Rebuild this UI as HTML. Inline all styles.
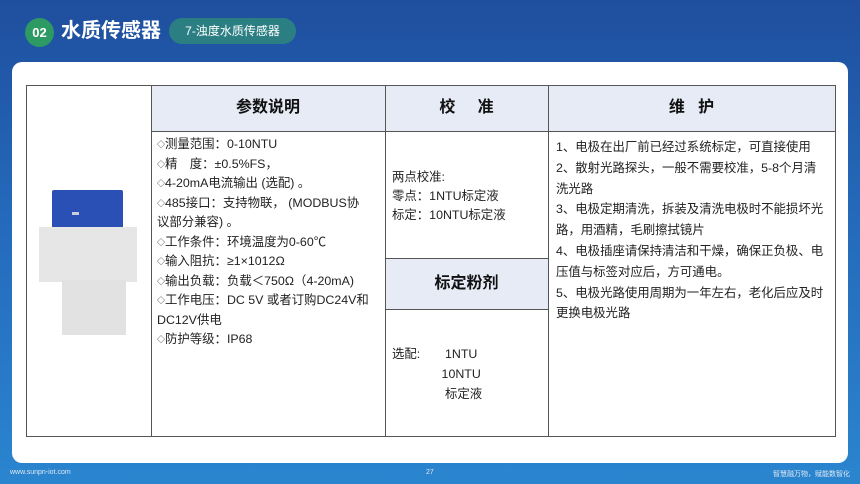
<!DOCTYPE html>
<html><head><meta charset="utf-8"><style>
*{margin:0;padding:0;box-sizing:border-box}
body{width:860px;height:484px;overflow:hidden;position:relative;font-family:"Liberation Sans","Noto Sans CJK SC",sans-serif;background:linear-gradient(180deg,#1f4e9e 0%,#2467b8 40%,#2a85cf 100%);color:#222}
.abs{position:absolute}
.num{left:25px;top:18px;width:29px;height:29px;border-radius:50%;background:#2e9a63;color:#fff;font-size:13px;font-weight:bold;text-align:center;line-height:29px}
.title{left:61px;top:16px;color:#fff;font-size:20px;font-weight:bold;line-height:30px}
.tag{left:169px;top:18px;width:127px;height:26px;border-radius:13px;background:#2b7f83;color:#fff;font-size:12px;line-height:26px;text-align:center}
.card{left:12px;top:62px;width:836px;height:401px;background:#fff;border-radius:10px}
.ln{position:absolute;background:#555}
.hd{position:absolute;background:#e6ebf6;font-size:16px;font-weight:bold;text-align:center;color:#111}
.t{position:absolute;font-size:12.4px;line-height:19.5px;white-space:nowrap}
.d{font-size:8px;vertical-align:1px}
.foot{top:469px;font-size:7px;color:#dfe9f5}
</style></head><body>
<div class="abs num">02</div>
<div class="abs title">水质传感器</div>
<div class="abs tag">7-浊度水质传感器</div>
<div class="abs card"></div>
<div class="hd" style="left:151px;top:85px;width:234px;height:46px;line-height:46px">参数说明</div>
<div class="hd" style="left:385px;top:85px;width:163px;height:46px;line-height:46px">校 &nbsp;&nbsp;&nbsp;&nbsp;准</div>
<div class="hd" style="left:548px;top:85px;width:287px;height:46px;line-height:46px">维 &nbsp;&nbsp;护</div>
<div class="hd" style="left:385px;top:258px;width:163px;height:51px;line-height:51px">标定粉剂</div>
<div class="ln" style="left:26px;top:85px;width:810px;height:1px"></div>
<div class="ln" style="left:26px;top:436px;width:810px;height:1px"></div>
<div class="ln" style="left:151px;top:131px;width:685px;height:1px"></div>
<div class="ln" style="left:385px;top:258px;width:163px;height:1px"></div>
<div class="ln" style="left:385px;top:309px;width:163px;height:1px"></div>
<div class="ln" style="left:26px;top:85px;width:1px;height:352px"></div>
<div class="ln" style="left:151px;top:85px;width:1px;height:352px"></div>
<div class="ln" style="left:385px;top:85px;width:1px;height:352px"></div>
<div class="ln" style="left:548px;top:85px;width:1px;height:352px"></div>
<div class="ln" style="left:835px;top:85px;width:1px;height:352px"></div>
<div class="abs" style="left:52px;top:190px;width:71px;height:44px;background:#2a4fb5;border-radius:2px"></div>
<div class="abs" style="left:72px;top:212px;width:7px;height:3px;background:#ccd"></div>
<div class="abs" style="left:39px;top:227px;width:98px;height:55px;background:#e6e6e6"></div>
<div class="abs" style="left:62px;top:280px;width:64px;height:55px;background:#e2e2e2"></div>
<div class="t" style="left:157px;top:135px"><span class="d">◇</span>测量范围：0-10NTU<br><span class="d">◇</span>精　度：±0.5%FS，<br><span class="d">◇</span>4-20mA电流输出 (选配) 。<br><span class="d">◇</span>485接口：支持物联， (MODBUS协<br>议部分兼容) 。<br><span class="d">◇</span>工作条件：环境温度为0-60℃<br><span class="d">◇</span>输入阻抗：≥1×1012Ω<br><span class="d">◇</span>输出负载：负载＜750Ω（4-20mA)<br><span class="d">◇</span>工作电压：DC 5V  或者订购DC24V和<br>DC12V供电<br><span class="d">◇</span>防护等级：IP68</div>
<div class="t" style="left:392px;top:168px;line-height:19px">两点校准:<br>零点：1NTU标定液<br>标定：10NTU标定液</div>
<div class="t" style="left:392px;top:344px;line-height:20px">选配:　　1NTU<br>　　　　10NTU<br>　　　　 标定液</div>
<div class="t" style="left:556px;top:137px;line-height:20.8px">1、电极在出厂前已经过系统标定，可直接使用<br>2、散射光路探头，一般不需要校准，5-8个月清<br>洗光路<br>3、电极定期清洗，拆装及清洗电极时不能损坏光<br>路，用酒精，毛刷擦拭镜片<br>4、电极插座请保持清洁和干燥，确保正负极、电<br>压值与标签对应后，方可通电。<br>5、电极光路使用周期为一年左右，老化后应及时<br>更换电极光路</div>
<div class="abs foot" style="left:10px">www.sunpn-iot.com</div>
<div class="abs foot" style="left:426px">27</div>
<div class="abs foot" style="right:10px">智慧融万物，赋能数智化</div>
</body></html>
